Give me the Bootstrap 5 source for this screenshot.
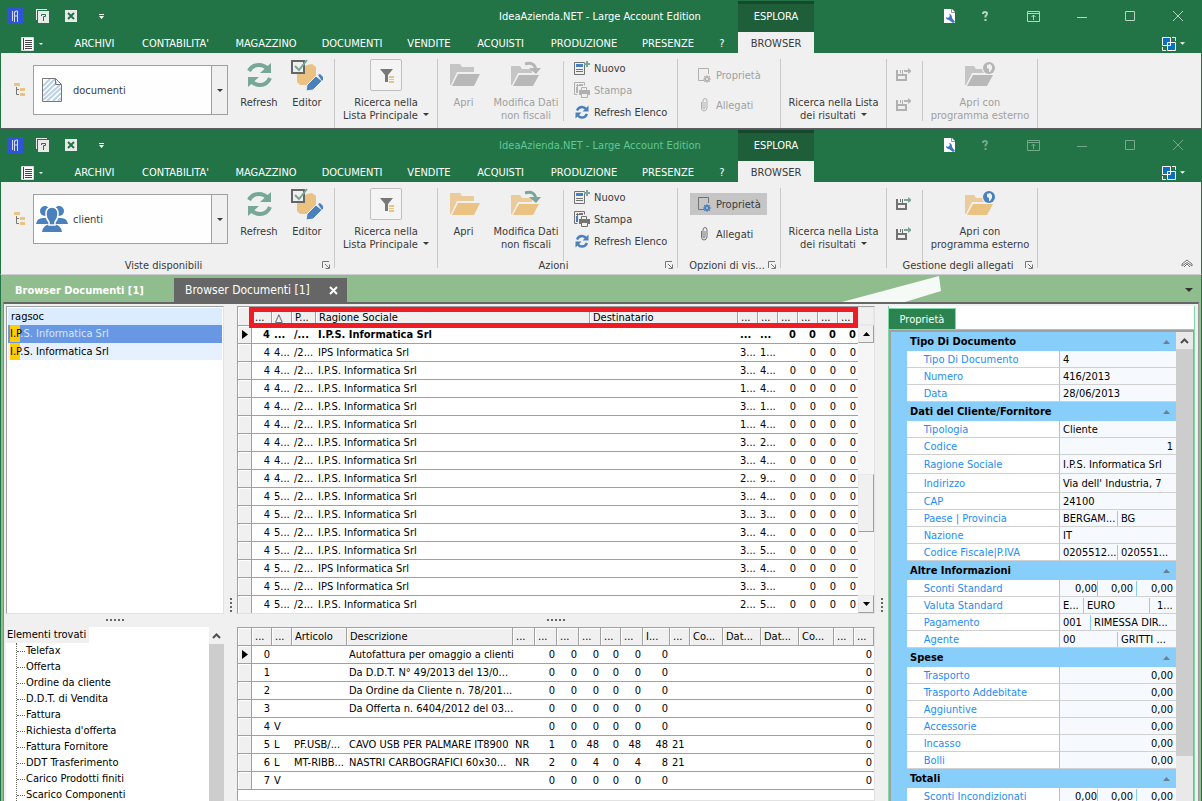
<!DOCTYPE html>
<html lang="it">
<head>
<meta charset="utf-8">
<meta name="viewport" content="width=device-width, initial-scale=1">
<title>IdeaAzienda.NET - Large Account Edition</title>
<link href="https://cdn.jsdelivr.net/npm/bootstrap@5.3.0/dist/css/bootstrap.min.css" rel="stylesheet">
<style>
:root{--green:#227447;--panel:#f0f0f0;--gray:#a0a0a0;--fold:#eac282;--fold2:#eccb9b;--teal:#76a797;--blue:#4a80bb;--ink:#727272}
body{font-family:"DejaVu Sans Condensed","Noto Sans",sans-serif;font-size:11px;line-height:13px;color:#000;background:var(--panel);overflow:hidden}
button,select{font:inherit;color:inherit;background:none;border:0;padding:0}
svg{display:block;flex:none}
.frame{border:1px solid var(--green);border-width:0 1px;background:var(--panel);color:#3a3a3a}
.head{background:var(--green);color:#fff}
.titlebar{display:grid;grid-template-columns:461px 276px 76px 1fr;height:32px;align-items:center;text-align:center}
.quick{gap:12px;padding:0 0 0 6px}
.quick svg{width:16px;height:16px}
.quick button:last-child{margin-left:2px}
.context{background:#1e5f3a;border-top:3px solid #17472c;height:31px;align-self:end;padding-bottom:4px}
.sys button{width:48px;height:32px;color:#b9d3c5}
.sys button:first-child{width:24px}
.sys svg{margin:0 auto}
.menubar{display:grid;grid-template-columns:60px 67px 95px 86px 86px 68px 75px 92px 76px 32px 76px 1fr;height:21px;text-align:center}
.menubar a,.menubar button{color:#fff;text-decoration:none;line-height:23px;padding:0;white-space:nowrap}
.menubar a.on{background:var(--panel);color:#3a3a3a}
.ribbon{height:75px}
.group{position:relative;border-right:1px solid #c9c9c9;margin-top:6px;height:69px}
.ribbon button{color:#3a3a3a}
.big{display:flex;flex-direction:column;align-items:center;padding-top:0;white-space:nowrap;height:69px;text-align:center}
.big svg{width:32px;height:32px;margin-bottom:5px}
.big .caret{display:inline-block;width:6px;height:3px;margin:0 0 3px 2px}
.boxed{border:1px solid #c0c0c0;border-radius:2px;width:32px;height:32px;margin-bottom:5px;background:#f4f4f4}
.boxed svg{width:30px;height:30px;margin:0}
.small-btn{display:flex;align-items:center;gap:4px;height:22px;white-space:nowrap}
.small-btn svg{width:16px;height:16px}
.sep{width:1px;background:#c9c9c9;margin:2px 0 7px}
.combo{position:relative;width:195px;height:50px;margin-top:6px}
.combo select{appearance:none;width:100%;height:50px;border:1px solid var(--gray);background:#fefefe;padding-left:39px}
.combo .pic{position:absolute;left:3px;top:9px}
.combo .drop{position:absolute;right:0;top:0;width:17px;height:50px;border:1px solid var(--gray);background:var(--panel);pointer-events:none;display:grid;place-items:center}
.w-doc{border-bottom:1px solid #5c5c64}
.w-doc .caps{display:none!important}
.ribbon button:disabled{color:#a0a0a0;--fold:#b8b8b8;--fold2:#c5c5c5;--teal:#b5b5b5;--blue:#b5b5b5;--ink:#b0b0b0}
.w-cli .group{height:80px;margin-bottom:-11px}
.w-cli .apptitle{color:#5fc795}
.w-cli .sys button:not(:first-child){color:#76a88d}
.w-cli .toggle{background:#c5c5c5}
.w-cli{border-bottom:1px solid #cfcbd3}
.caps{display:flex;height:17px}
.caps>div{display:flex;align-items:flex-start;text-align:center;white-space:nowrap;padding:2px 5px 0 0}
.caps span{flex:1;padding-left:4px}
.caps svg{margin:2px 0 0}
.group,.caps>div,.ribbon .big:not(.w-100):not(.flex-fill){width:var(--w);flex:none}
.tr{margin:24px 7px 0 13px}
.combo+.big{margin-left:7px}
.low{padding-top:37px}
.pairs{padding:5px 0 0 12px}
.pairs .small-btn{width:77px;padding-left:6px;margin-bottom:8px}
.pairs.saves{padding-left:8px;width:35px}
.pairs.saves .small-btn{padding:0;width:20px}
.caps>div:nth-child(4){padding-left:4px}
.actions{padding-left:10px;margin-top:-2px}
/* document tabs */
.desk{border:1px solid var(--green);border-width:0 1px;flex:1;min-height:0;background:#90bd8d;display:flex;flex-direction:column}
.doctabs{position:relative;height:27px;display:flex;align-items:flex-end;color:#fff;font-size:12px}
.doctabs button{height:24px;text-align:left;white-space:nowrap}
.doctabs .one{width:173px;padding-left:14px;font-weight:700;font-size:11px}
.doctabs .two{width:173px;padding:0 9px 0 11px;background:#666;display:flex;align-items:center;justify-content:space-between}
.flash{position:absolute;right:260px;top:0}
.doctabs .more{margin-left:auto;width:24px}
.doctabs .more svg{margin:0 auto}
.work{flex:1;min-height:0;margin:0 2px;border-top:2px solid #666;border-left:1px solid #888;border-right:1px solid #999;background:var(--panel);padding:2px 3px 0 2px;display:grid;grid-template-columns:218px minmax(0,1fr) 307px;grid-template-rows:auto minmax(0,1fr);column-gap:13px;row-gap:13px}
.work>*{position:relative;min-height:0;min-width:0}
.work>.right{grid-column:3;grid-row:1/3}
.box{background:#fff;border:1px solid var(--gray);border-right-color:#e2e2e2;border-bottom-color:#e2e2e2;overflow:hidden}
.dots-h,.dots-v{position:absolute;display:flex;gap:2px}
.dots-h i,.dots-v i{width:2px;height:2px;background:#666}
.dots-h{left:0;right:0;justify-content:center;bottom:-7px}
.dots-v{right:-8px;bottom:2px;flex-direction:column}
.hits{border:0;padding:1px 1px 0}
.hits .list-group-item{border:0;border-radius:0;padding:0 0 0 2px;height:17px;line-height:17px;color:#000;background:#e6f0fe}
.hits .list-group-item:first-child{background:#dcecff;padding-left:3px}
.hits .list-group-item.sel{background:#6898e4;color:#dbe6fa;height:18px;line-height:18px}
.hits b{font-weight:400;background:#ffcc00;color:#000;padding:2px 0}
.tree{margin:0;padding:0;list-style:none;white-space:nowrap}
.tree>li>span{background:var(--panel);display:block;width:max-content;line-height:16px;padding:0 3px 0 1px}
.tree ul{list-style:none;margin:0 0 0 10px;padding:0;border-left:1px dotted #666}
.tree ul li{height:16px;line-height:16px;display:flex;align-items:center;gap:1px}
.tree ul li:before{content:"";width:8px;border-top:1px dotted #666}
.bar{width:15px;background:#cdcdcd;flex:none}
.bar div{height:17px;background:var(--panel);display:grid;place-items:center}
.gridt{table-layout:fixed;border-collapse:separate;border-spacing:0;width:100%;color:#000}
.gridt td,.gridt th{padding:0 2px;white-space:nowrap;height:18px;line-height:17px;border-bottom:1px solid var(--gray);font-weight:400;text-align:left}
.gridt th{background:var(--panel);border-right:1px solid var(--gray);box-shadow:inset 1px 1px #fff;padding:0 3px}
.gridt td:first-child{background:var(--panel);border-right:1px solid var(--gray);box-shadow:inset 1px 1px #fff;padding:0 0 0 4px}
.gridt td.r{text-align:right}
.gridt .cur td{font-weight:700}
.orders th{height:19px;line-height:15px;padding-top:3px}
.orders tr:last-child td{height:17px;border-bottom:0}
.redbox{position:absolute;left:12px;right:17px;top:1px;height:21px;border:5px solid #ee1c24;pointer-events:none}
.vscroll{width:16px;flex:none;background:#f6f6f6;display:flex;flex-direction:column}
.vscroll>*{background:var(--panel);border:1px solid var(--gray);border-top-color:#e8e8e8;border-left-color:#e8e8e8;display:grid;place-items:center;height:18px}
.vscroll .top{border-color:#e8e8e8}
.vscroll .thumb{height:58px;margin:auto 0 63px}
.props{background:#fff;height:100%;display:flex;flex-direction:column;border-left:1px solid #7fd9a4;border-right:1px solid #7fd9a4}
.props .tabtop{background:#fff;height:24px;flex:none;border-bottom:1px solid #7fd9a4;padding-top:2px}
.props .tabtop button{width:67px;height:21px;background:#2b8350;color:#fff;border:1px solid #7fd9a4;border-width:1px 1px 0 0}
.pbody{flex:1;min-height:0;display:flex;border:2px solid var(--gray);border-width:2px 1px 0 2px;overflow:hidden}
.ptab{flex:1;align-self:flex-start;table-layout:fixed;border-collapse:separate;border-spacing:0;color:#000;background:#87cefa}
.ptab td,.ptab th{padding:1px 0 0;height:17px;line-height:15px;white-space:nowrap;overflow:hidden}
.ptab th.cat{height:19px;line-height:19px;padding:0 6px 0 19px;font-weight:700}
.ptab tbody th.lab{background:#fff;color:#1e8df5;font-weight:400;padding-left:17px;border-bottom:1px solid #d0d0d0}
.ptab td.val{background:#f6faff;border-bottom:1px solid #d0d0d0;border-left:1px solid #87cefa;padding:1px 3px 0}
.ptab tr.tall>*{height:19px;line-height:17px}
.val div{display:flex}
.val div>span{overflow:hidden;border-left:1px solid #87cefa;padding-left:3px}
.val div>span:first-child{border:0;padding:0}
.val .two span:first-child{width:54px}
.val .three span{width:39px;text-align:right;padding-right:3px}
.val .three span:first-child{width:34px}.val .three span:last-child{padding-right:0;width:37px}
.val .cur3 span:first-child{width:20px}.val .cur3 span:nth-child(2){width:66px}.val .cur3 span:last-child{padding-left:7px}
.val .pay span:first-child{width:27px}
.pbody .bar{width:17px;background:#e9e9e9}
.pbody .bar div{background:#e9e9e9}
.pbody .bar p{height:407px;background:#cdcdcd;margin:0}
</style>
</head>
<body class="vh-100 d-flex flex-column">
<svg width="0" height="0" class="position-absolute" aria-hidden="true">
<symbol id="logo" viewBox="0 0 16 16"><path fill="#2f55d4" d="M0 0h16v16H0z"/><path d="M5.500 3v10M7.500 14V3.500M10.500 3v11M7.500 5q1-3 3-2M10 8H8" stroke="#d5dcf7" fill="none"/></symbol>
<symbol id="helpdoc" viewBox="0 0 16 16"><path fill="#e8ece9" d="M1 1h11v1H2v10H1zM3 3h11v12H3z"/><path d="M6.500 8V6.500h4v2h-2V13" stroke="#227447" fill="none"/></symbol>
<symbol id="xls" viewBox="0 0 16 16"><path fill="#e8ece9" d="M2 2h12v12H2z"/><path d="M5 5l6 6M11 5l-6 6" stroke="#227447" stroke-width="2"/></symbol>
<symbol id="caret" viewBox="0 0 6 3"><path fill="currentColor" d="M0 0h6L3 3z"/></symbol>
<symbol id="doclist" viewBox="0 0 14 14"><path fill="#fff" stroke="#ddd" d="M.5.5h12v13H.5z"/><path d="M2.500 1v12M4 3.500h7M4 5.500h7M4 7.500h7M4 9.500h7M4 11.500h7" stroke="#444"/></symbol>
<symbol id="tree" viewBox="0 0 12 13"><path fill="#eac282" d="M0 0h6v3H0zM6 5h5v3H6zM6 10h5v3H6z"/><path d="M2.500 4v7.500H5M2.500 6.500H5" stroke="#777" fill="none"/></symbol>
<symbol id="page" viewBox="0 0 32 32"><path d="M6.500 4.500h13l6 6v17h-19z" fill="#fff"/><path d="M7 12l7-7M7 17L19 5M7 22L21 8M7 26l17-15M11 27l14-13M17 27l8-8M22 27l3-3" stroke="#b9d0e8" stroke-width="2"/><path d="M6.500 4.500h13l6 6v17h-19zM19.500 4.500v6h6" fill="none" stroke="#777"/></symbol>
<symbol id="people" viewBox="0 0 32 32"><g fill="#4a80bb"><circle cx="9" cy="8" r="5"/><circle cx="23" cy="8" r="5"/><path d="M0 21q1-6 7-6h18q6 0 7 6z"/><path d="M6 29q1-7 8-8h4q7 1 8 8z"/></g><path d="M16 4q6 0 6 7 0 5-3 8v3h-6v-3q-3-3-3-8 0-7 6-7z" fill="#4a80bb" stroke="#fff" stroke-width="1.500"/></symbol>
<symbol id="refresh" viewBox="0 0 32 32"><path fill="none" stroke="var(--teal)" stroke-width="4" d="M6 12q3-6 10-6 5 0 9 4M27 19q-3 7-10 7-5 0-9-4"/><path fill="var(--teal)" d="M28 4v10H17zM5 28V18h11z"/></symbol>
<symbol id="refresh2" viewBox="0 0 32 32"><path fill="none" stroke="var(--blue)" stroke-width="5" d="M6 13q3-7 10-7 5 0 8 4M26 20q-3 7-10 7-5 0-8-4"/><path fill="var(--blue)" d="M29 3v12H17zM3 29V17h12z"/></symbol>
<symbol id="editor" viewBox="0 0 32 32"><path fill="#eac282" d="M6 13l10-7 5-1 4 3v12l-7 6H9l-3-3z"/><path fill="#f0f0f0" stroke="#666" stroke-width="2" d="M1 2h12v12H1z"/><path fill="none" stroke="#76a797" stroke-width="2" d="M4 7l4 4 8-10"/><path fill="#4a80bb" stroke="#f0f0f0" d="M16 26l9-9 6 5-9 9-7 1z"/><path fill="#4a80bb" d="M27 16l2-1 4 4-2 3z"/></symbol>
<symbol id="funnel" viewBox="0 0 30 30"><path fill="#777" d="M9 9h13l-5 6v7h-3v-7z"/><path fill="#eac282" d="M18 16h5v7h-5z"/><path stroke="#f4f4f4" d="M18 18.500h5M18 20.500h5"/></symbol>
<symbol id="folder" viewBox="0 0 32 32"><path fill="var(--fold2)" d="M2 5h10l2 3h12v5H9L3 26H2z"/><path fill="var(--fold)" d="M10 15h22l-6 12H4z"/></symbol>
<symbol id="folderup" viewBox="0 0 32 32"><path fill="var(--fold2)" d="M1 7h9l2 3h10v4H8L2 26H1z"/><path fill="var(--fold)" d="M9 16h20l-6 11H3z"/><path fill="none" stroke="var(--teal)" stroke-width="3" d="M15 5q10-3 11 7"/><path fill="var(--teal)" d="M19 9h12l-5 6z"/></symbol>
<symbol id="folderext" viewBox="0 0 32 32"><path fill="var(--fold2)" d="M1 7h9l2 3h16v4H8L2 26H1z"/><path fill="var(--fold)" d="M9 16h20l-6 11H3z"/><circle cx="25" cy="9" r="7" fill="#f0f0f0"/><circle cx="25" cy="9" r="6" fill="var(--blue)"/><path fill="#f0f0f0" d="M23 6l3-1 2 2v3l-2 3h-1V10l-2-1z"/></symbol>
<symbol id="new" viewBox="0 0 16 16"><path fill="none" stroke="#727272" d="M.5 2.500h10v12H.5z"/><path fill="#4a80bb" d="M2 4h7v3H2z"/><path stroke="#727272" d="M2 9.500h7M2 11.500h7"/><path stroke="#f0f0f0" stroke-width="4" d="M13 1v7"/><path stroke="#76a797" stroke-width="2" d="M13 1v6M10 4h6"/></symbol>
<symbol id="print" viewBox="0 0 16 16"><path fill="none" stroke="var(--ink)" d="M.5.5h10v3M.5.5v12h3M3.500 2v9M2 3.500h7"/><path stroke="var(--blue)" d="M5 2.500h4M2.500 5v6"/><path fill="var(--ink)" d="M5 8h11v5H5z"/><path fill="#f0f0f0" stroke="var(--ink)" d="M7.500 5.500h5v3h-5zM7.500 11.500h6v4h-6z"/></symbol>
<symbol id="prop" viewBox="0 0 16 16"><path fill="none" stroke="var(--ink)" d="M8 13.500H2.500V1.500h10V7"/><circle cx="11" cy="12" r="2" fill="none" stroke="var(--blue)" stroke-width="2"/><path stroke="var(--blue)" d="M11 8v2M11 14v2M7 12h2M13 12h2M8 9l2 2M14 9l-2 2M8 15l2-2M14 15l-2-2"/></symbol>
<symbol id="clip" viewBox="0 0 16 16"><path fill="none" stroke="var(--ink)" d="M5.500 5v6q0 3 2.500 3t3-3V4q0-2.500-2-2.500T7 4v6q0 2 1 2t1-2V5"/></symbol>
<symbol id="saveout" viewBox="0 0 16 16"><path fill="var(--ink)" d="M1 3h2v4h4V3h1v4h4v7H1zM3 9v3h7V9z" fill-rule="evenodd"/><path fill="var(--ink)" d="M5 3h1v3H5z"/><path stroke="#f0f0f0" d="M8 6.500h4"/><path stroke="var(--teal)" stroke-width="2" d="M9 4h5"/><path fill="var(--teal)" d="M13 1l4 3-4 3z"/></symbol>
<symbol id="launch" viewBox="0 0 8 8"><path fill="none" stroke="#777" d="M.5 7V.5H7M3 3l4 4M7.500 3.500v4h-4"/></symbol>
<symbol id="tools" viewBox="0 0 16 16"><path fill="#fff" d="M3 1h8l3 3v11H3z"/><path d="M10.500 1v3.500H14" stroke="#999" fill="none"/><path d="M8 6l1 2-2 2-2-1q0 3 3 3l4 3 2-1-3-4q0-4-3-4z" fill="#3a77c0"/></symbol>
<symbol id="ask" viewBox="0 0 16 16"><path d="M6 6V5.500Q6 4 8 4t2 1.500Q10 7 8.500 8v1.500M8.500 11v2" fill="none" stroke="currentColor" stroke-width="2"/></symbol>
<symbol id="ribup" viewBox="0 0 16 16"><path d="M2.500 3.500h12v10h-12zM2 5.500h13M8.500 12V7M6.500 9l2-2 2 2" fill="none" stroke="currentColor"/></symbol>
<symbol id="min" viewBox="0 0 16 16"><path d="M4 9.500h10" stroke="currentColor"/></symbol>
<symbol id="max" viewBox="0 0 16 16"><path d="M4.500 3.500h9v9h-9z" fill="none" stroke="currentColor"/></symbol>
<symbol id="close" viewBox="0 0 16 16"><path d="M4 3l10 10M14 3L4 13" stroke="currentColor"/></symbol>
<symbol id="windows" viewBox="0 0 14 14"><path fill="#0a6fc2" stroke="#fff" d="M.5.5h8v8h-8zM5.500 5.500h8v8h-8z"/><path d="M10 .5h3.500V4M.5 10v3.500H4" fill="none" stroke="#fff"/></symbol>
<symbol id="chev" viewBox="0 0 9 6"><path d="M1 5l3.500-3.500L8 5" fill="none" stroke="#505050" stroke-width="2"/></symbol>
</svg>

<template id="windowTop">
<div class="head">
 <div class="titlebar">
  <div class="quick d-flex align-items-center">
   <button aria-label="IdeaAzienda"><svg><use href="#logo"/></svg></button><button aria-label="Guida"><svg><use href="#helpdoc"/></svg></button><button aria-label="Chiudi"><svg><use href="#xls"/></svg></button>
   <button aria-label="Personalizza"><svg viewBox="0 0 16 16"><path fill="#fff" d="M6 6h5v1H6zM6 8h5l-2.500 3z"/></svg></button>
  </div>
  <div class="apptitle text-nowrap">IdeaAzienda.NET - Large Account Edition</div>
  <div class="context d-flex justify-content-center align-items-center">ESPLORA</div>
  <div class="sys d-flex justify-content-end">
   <button aria-label="Strumenti"><svg width="16" height="16"><use href="#tools"/></svg></button><button aria-label="Aiuto"><svg width="16" height="16"><use href="#ask"/></svg></button><button aria-label="Barra"><svg width="16" height="16"><use href="#ribup"/></svg></button><button aria-label="Riduci"><svg width="16" height="16"><use href="#min"/></svg></button><button aria-label="Ingrandisci"><svg width="16" height="16"><use href="#max"/></svg></button><button aria-label="Chiudi finestra"><svg width="16" height="16"><use href="#close"/></svg></button>
  </div>
 </div>
 <nav class="menubar">
  <button class="d-flex align-items-center ps-3 gap-1" aria-label="File"><svg class="ms-1" width="14" height="14"><use href="#doclist"/></svg><svg width="4" height="2"><use href="#caret"/></svg></button>
  <a href="#">ARCHIVI</a><a href="#">CONTABILITA'</a><a href="#">MAGAZZINO</a><a href="#">DOCUMENTI</a><a href="#">VENDITE</a><a href="#">ACQUISTI</a><a href="#">PRODUZIONE</a><a href="#">PRESENZE</a><a href="#">?</a><a href="#" class="on">BROWSER</a>
  <button class="d-flex align-items-center justify-content-end gap-1 pe-3" aria-label="Finestre"><svg width="14" height="14"><use href="#windows"/></svg><svg width="5" height="3"><use href="#caret"/></svg></button>
 </nav>
</div>
<div class="ribbon d-flex">
 <div class="group d-flex" style="--w:334px">
  <svg width="12" height="13" class="tr"><use href="#tree"/></svg>
  <div class="combo"><select aria-label="Vista"><option></option></select><svg class="pic" width="32" height="32"><use/></svg><span class="drop"><svg width="6" height="3"><use href="#caret"/></svg></span></div>
  <button class="big" style="--w:48px"><svg><use href="#refresh"/></svg>Refresh</button>
  <button class="big" style="--w:48px"><svg><use href="#editor"/></svg>Editor</button>
 </div>
 <div class="group" style="--w:103px"><button class="big w-100"><span class="boxed"><svg><use href="#funnel"/></svg></span><span>Ricerca nella<br>Lista Principale <svg class="caret"><use href="#caret"/></svg></span></button></div>
 <div class="group d-flex" style="--w:240px">
  <button class="big" data-doc style="--w:51px"><svg><use href="#folder"/></svg>Apri</button>
  <button class="big" data-doc style="--w:74px"><svg><use href="#folderup"/></svg>Modifica Dati<br>non fiscali</button>
  <div class="sep"></div>
  <div class="actions"><button class="small-btn"><svg><use href="#new"/></svg>Nuovo</button><button class="small-btn" data-doc><svg><use href="#print"/></svg>Stampa</button><button class="small-btn"><svg><use href="#refresh2"/></svg>Refresh Elenco</button></div>
 </div>
 <div class="group pairs" style="--w:103px"><button class="small-btn toggle" data-doc><svg><use href="#prop"/></svg>Proprietà</button><button class="small-btn" data-doc><svg><use href="#clip"/></svg>Allegati</button></div>
 <div class="group" style="--w:106px"><button class="big w-100 low"><span>Ricerca nella Lista<br>dei risultati <svg class="caret"><use href="#caret"/></svg></span></button></div>
 <div class="group d-flex" style="--w:151px">
  <div class="pairs saves"><button class="small-btn" data-doc aria-label="Salva"><svg><use href="#saveout"/></svg></button><button class="small-btn" data-doc aria-label="Salva tutti"><svg><use href="#saveout"/></svg></button></div>
  <div class="sep"></div>
  <button class="big flex-fill" data-doc><svg><use href="#folderext"/></svg>Apri con<br>programma esterno</button>
 </div>
</div>
<div class="caps">
 <div style="--w:334px"><span>Viste disponibili</span><svg width="8" height="8"><use href="#launch"/></svg></div><div style="--w:103px"></div><div style="--w:240px"><span>Azioni</span><svg width="8" height="8"><use href="#launch"/></svg></div><div style="--w:103px"><span>Opzioni di vis...</span><svg width="8" height="8"><use href="#launch"/></svg></div><div style="--w:106px"></div><div style="--w:151px"><span>Gestione degli allegati</span><svg width="8" height="8"><use href="#launch"/></svg></div>
 <button class="ms-auto pe-2 pb-2" aria-label="Comprimi"><svg width="12" height="9" viewBox="0 0 12 9"><path d="M1 5l5-4 5 4v2L6 3.500 1 7zM3 8l3-3 3 3" fill="none" stroke="#777"/></svg></button>
</div>
</template>

<header class="frame w-doc"></header>
<header class="frame w-cli"></header>

<main class="desk">
 <div class="doctabs">
  <button class="one">Browser Documenti [1]</button>
  <button class="two">Browser Documenti [1]<svg width="9" height="9" viewBox="0 0 9 9"><path d="M1 1l7 7M8 1L1 8" stroke="#fff" stroke-width="2"/></svg></button>
  <svg class="flash" width="99" height="27" viewBox="0 0 99 27"><path fill="#f6faf6" d="M97 1l2 15-36 11H0z"/></svg>
  <button class="more" aria-label="Altre schede"><svg width="8" height="4" viewBox="0 0 6 3" color="#333"><use href="#caret"/></svg></button>
 </div>
 <div class="work">
  <section>
   <div class="box h-100"><ul class="list-group hits"><li class="list-group-item">ragsoc</li><li class="list-group-item sel"><b>I.P</b>.S. Informatica Srl</li><li class="list-group-item"><b>I.P</b>.S. Informatica Srl</li></ul></div>
   <div class="dots-h"><i></i><i></i><i></i><i></i><i></i></div><div class="dots-v"><i></i><i></i><i></i><i></i></div>
  </section>
  <section>
   <div class="box d-flex"><table class="gridt orders" id="orders"></table>
    <div class="vscroll"><div class="top"></div><div><svg width="7" height="4" viewBox="0 0 7 4"><path d="M0 4h7L3.500 0z"/></svg></div><span class="thumb"></span><div><svg width="7" height="4" viewBox="0 0 7 4"><path d="M0 0h7L3.500 4z"/></svg></div></div>
   </div>
   <div class="redbox"></div>
   <div class="dots-h"><i></i><i></i><i></i><i></i><i></i></div><div class="dots-v"><i></i><i></i><i></i><i></i></div>
  </section>
  <section class="right">
   <div class="props">
    <div class="tabtop"><button>Proprietà</button></div>
    <div class="pbody"><table class="ptab" id="props"></table><div class="bar"><div><svg width="9" height="6"><use href="#chev"/></svg></div><p></p></div></div>
   </div>
  </section>
  <section class="d-flex bg-white overflow-hidden">
   <ul class="tree flex-fill"><li><span>Elementi trovati</span><ul><li>Telefax</li><li>Offerta</li><li>Ordine da cliente</li><li>D.D.T. di Vendita</li><li>Fattura</li><li>Richiesta d'offerta</li><li>Fattura Fornitore</li><li>DDT Trasferimento</li><li>Carico Prodotti finiti</li><li>Scarico Componenti</li></ul></li></ul>
   <div class="bar"><div><svg width="9" height="6"><use href="#chev"/></svg></div></div>
  </section>
  <section class="box"><table class="gridt" id="lines"></table></section>
 </div>
</main>
<script src="https://cdn.jsdelivr.net/npm/bootstrap@5.3.0/dist/js/bootstrap.bundle.min.js"></script>
<script>
const tpl = document.getElementById('windowTop');
function buildWindow(sel, view, icon, documentReady) {
  const host = document.querySelector(sel);
  host.append(tpl.content.cloneNode(true));
  host.querySelector('option').textContent = view;
  host.querySelector('.pic use').setAttribute('href', icon);
  host.querySelectorAll('[data-doc]').forEach(b => b.disabled = !documentReady);
}
buildWindow('.w-doc', 'documenti', '#page', false);
buildWindow('.w-cli', 'clienti', '#people', true);

const marker = '<svg width="6" height="9" viewBox="0 0 6 9"><path d="M0 0v9l6-4.500z"/></svg>';
function table(id, cols, heads, rows, right) {
  const cg = '<colgroup>' + cols.map(w => w ? `<col style="width:${w}px">` : '<col>').join('') + '</colgroup>';
  const th = '<thead><tr><th></th>' + heads.map(h => `<th>${h}</th>`).join('') + '</tr></thead>';
  const tb = '<tbody>' + rows.map((r, i) => `<tr><td>${i ? '' : marker}</td>` +
    r.map((c, k) => `<td${right.includes(k) ? ' class="r"' : ''}>${c}</td>`).join('') + '</tr>').join('') + '</tbody>';
  document.getElementById(id).innerHTML = cg + th + tb;
}
const P = 'I.P.S. Informatica Srl', Q = 'IPS Informatica Srl';
const orders = [['...','/...',P,'...','...','0'],['4...','/2...',Q,'3...','1...',''],['4...','/2...',P,'3...','4...','0'],['4...','/2...',P,'1...','4...','0'],
 ['4...','/2...',P,'3...','1...','0'],['4...','/2...',P,'1...','4...','0'],['4...','/2...',P,'3...','2...','0'],['4...','/2...',P,'3...','4...','0'],
 ['4...','/2...',P,'2...','9...','0'],['5...','/2...',P,'3...','4...','0'],['5...','/2...',P,'3...','3...','0'],['5...','/2...',P,'3...','4...','0'],
 ['5...','/2...',P,'3...','5...','0'],['5...','/2...',Q,'3...','4...','0'],['5...','/2...',Q,'3...','3...',''],['5...','/2...',P,'2...','5...','0']]
 .map(o => ['4', o[0], o[1], o[2], '', o[3], o[4], o[5], '0', '0', '0']);
table('orders', [14,20,20,24,0,148,20,20,20,20,20,20], ['...','△','P...','Ragione Sociale','Destinatario','...','...','...','...','...','...'], orders, [0,7,8,9,10]);
document.querySelector('#orders tbody tr').className = 'cur';

const z = (n, v, a, d, u, q) => [n, v, a, d, u, ...(q || ['0','0','0','0','0','0']), q ? '21' : '', '', '', '', '', '', '0'];
table('lines', [14,20,20,55,0,22,22,22,22,20,22,27,20,33,38,38,35,20,20],
 ['...','...','Articolo','Descrizione','...','...','...','...','...','...','I...','...','Co...','Dat...','Dat...','Co...','...','...'],
 [z('0','','','Autofattura per omaggio a clienti',''), z('1','','','Da D.D.T. N° 49/2013 del 13/0...',''), z('2','','','Da Ordine da Cliente n. 78/201...',''),
  z('3','','','Da Offerta n. 6404/2012 del 03...',''), z('4','V','','',''),
  z('5','L','PF.USB/...','CAVO USB PER PALMARE IT8900','NR',['1','0','48','0','48','48']),
  z('6','L','MT-RIBB...','NASTRI CARBOGRAFICI 60x30...','NR',['2','0','4','0','4','8']), z('7','V','','','')], [0,5,6,7,8,9,10,17]);

const multi = (cls, ...v) => `<div class="${cls}">` + v.map(x => `<span>${x}</span>`).join('') + '</div>';
const num = v => `<div class="justify-content-end">${v}</div>`;
const zeros = multi('three', '0,00', '0,00', '0,00');
const groups = [
 ['Tipo Di Documento', [['Tipo Di Documento','4'],['Numero','416/2013'],['Data','28/06/2013']]],
 ['Dati del Cliente/Fornitore', [['Tipologia','Cliente'],['Codice',num('1')],['Ragione Sociale',P,1],['Indirizzo',"Via dell' Industria, 7",1],['CAP','24100'],
  ['Paese | Provincia',multi('two','BERGAM...','BG')],['Nazione','IT'],['Codice Fiscale|P.IVA',multi('two','0205512...','020551...')]]],
 ['Altre Informazioni', [['Sconti Standard',zeros],['Valuta Standard',multi('cur3','E...','EURO','1...')],['Pagamento',multi('pay','001','RIMESSA DIR...')],['Agente',multi('two','00','GRITTI ...')]]],
 ['Spese', ['Trasporto','Trasporto Addebitate','Aggiuntive','Accessorie','Incasso','Bolli'].map(n => [n, num('0,00')])],
 ['Totali', [['Sconti Incondizionati',zeros]]]];
document.getElementById('props').innerHTML = '<colgroup><col style="width:16px"><col style="width:153px"><col></colgroup><tbody>' + groups.map(([g, items]) =>
 `<tr><th class="cat" colspan="3"><div class="d-flex justify-content-between align-items-center">${g}<svg width="7" height="4" viewBox="0 0 7 4"><path fill="#6d7f8c" d="M0 4h7L3.500 0z"/></svg></div></th></tr>` +
 items.map(([l, v, t]) => `<tr${t ? ' class="tall"' : ''}><td></td><th class="lab">${l}</th><td class="val">${v}</td></tr>`).join('')).join('') + '</tbody>';
</script>
</body>
</html>
